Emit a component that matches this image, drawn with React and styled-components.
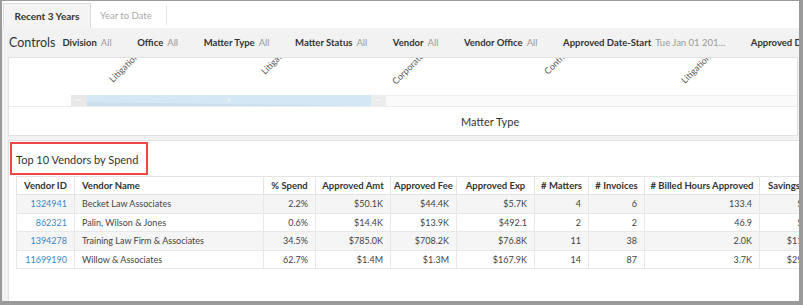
import React from 'react';
import styled, { createGlobalStyle } from 'styled-components';

const Global = createGlobalStyle`
  html, body { margin: 0; padding: 0; background: #fff; }
  body { font-family: Lato, "Noto Sans", sans-serif; color: #333; }
`;

const Frame = styled.div`
  width: 803px;
  height: 305px;
  box-sizing: border-box;
  border-style: solid;
  border-color: #9a9a9a;
  border-width: 1px 4px 4px 2px;
  background: #f2f2f2;
  overflow: hidden;
  display: flex;
  flex-direction: column;
`;

const TabRow = styled.div`
  height: 27px;
  flex: none;
  background: #fff;
  display: flex;
  align-items: stretch;
  padding: 2px 0 0 1px;
  box-sizing: border-box;
`;

const Tab = styled.div`
  display: flex;
  align-items: center;
  font-size: 10px;
  box-sizing: border-box;
  ${p => p.$active ? `
    width: 88px;
    justify-content: center;
    background: #f4f4f4;
    border: 1px solid #dcdcdc;
    border-bottom: none;
    font-weight: 700;
    color: #333;
  ` : `
    padding: 0 14px 0 9px;
    color: #a8a8a8;
    font-size: 9.5px;
  `}
`;

const TabDivider = styled.div`
  width: 1px;
  background: #e6e6e6;
  margin: 2px 0 3px;
`;

const Controls = styled.div`
  height: 29px;
  flex: none;
  display: flex;
  align-items: center;
  padding-left: 7px;
  white-space: nowrap;
`;

const ControlsTitle = styled.span`
  font-size: 12.5px;
  color: #333;
  margin-right: 7px;
`;

const Filter = styled.span`
  font-size: 9.5px;
  margin-right: 25.5px;
  flex: none;
`;

const FilterLabel = styled.b`
  font-weight: 700;
  color: #333;
`;

const FilterValue = styled.span`
  color: #9a9a9a;
  margin-left: 4px;
`;

const Panel = styled.div`
  background: #fff;
  border: 1px solid #e2e2e2;
  box-sizing: border-box;
  margin: ${p => p.$margin};
  display: flex;
  flex-direction: column;
  ${p => p.$grow ? 'flex: 1; border-bottom: none; min-height: 0;' : `flex: none; height: ${p.$h}px;`}
`;

const ChartArea = styled.div`
  height: 48px;
  flex: none;
  overflow: hidden;
`;

const AxisTitle = styled.div`
  flex: 1;
  border-top: 1px solid #ececec;
  display: flex;
  align-items: center;
  padding-left: 452px;
  font-size: 11px;
  color: #333;
`;

const TitleBox = styled.div`
  width: 138px;
  height: 33px;
  box-sizing: border-box;
  border: 2.5px solid #f04545;
  margin: 1px 0 0 1px;
  padding: 2px 0 0 4px;
  display: flex;
  align-items: center;
  font-size: 11px;
  color: #333;
  white-space: nowrap;
`;

const Table = styled.table`
  border-collapse: collapse;
  table-layout: fixed;
  width: ${p => p.$width}px;
  flex: none;
  margin: 1px 0 0 7px;
  font-size: 9px;
  white-space: nowrap;
`;

const Th = styled.th`
  height: 17px;
  padding: 0 ${p => p.$left ? 7 : 3}px;
  border: 1px solid #e4e4e4;
  font-weight: 700;
  font-size: 9.5px;
  color: #333;
  text-align: ${p => p.$left ? 'left' : 'center'};
  overflow: hidden;
`;

const Tr = styled.tr`
  background: ${p => p.$alt ? '#f5f5f5' : '#fff'};
`;

const Td = styled.td`
  height: 17.5px;
  padding: 0 7px;
  border: 1px solid #e8e8e8;
  color: #444;
  text-align: ${p => p.$left ? 'left' : 'right'};
  overflow: hidden;
`;

const Link = styled.span`
  color: #3b86c6;
`;

const filters = [
  ['Division', 'All'],
  ['Office', 'All'],
  ['Matter Type', 'All'],
  ['Matter Status', 'All'],
  ['Vendor', 'All'],
  ['Vendor Office', 'All'],
  ['Approved Date-Start', 'Tue Jan 01 201...'],
  ['Approved Date-End', 'All'],
];

const axisLabels = [
  { x: 104, y: 25, t: 'Litigation ...' },
  { x: 256, y: 17, t: 'Litigation ...' },
  { x: 387, y: 27, t: 'Corporate I...' },
  { x: 539, y: 17, t: 'Contracts ...' },
  { x: 676, y: 26, t: 'Litigation ...' },
];

const cols = [58, 189, 52, 75, 66, 78, 54, 56, 115, 69];
const tableWidth = cols.reduce((a, b) => a + b, 0);
const headers = ['Vendor ID', 'Vendor Name', '% Spend', 'Approved Amt', 'Approved Fee', 'Approved Exp', '# Matters', '# Invoices', '# Billed Hours Approved', 'Savings Amt'];
const rows = [
  ['1324941', 'Becket Law Associates', '2.2%', '$50.1K', '$44.4K', '$5.7K', '4', '6', '133.4', '$5.8K'],
  ['862321', 'Palin, Wilson & Jones', '0.6%', '$14.4K', '$13.9K', '$492.1', '2', '2', '46.9', '$1.2K'],
  ['1394278', 'Training Law Firm & Associates', '34.5%', '$785.0K', '$708.2K', '$76.8K', '11', '38', '2.0K', '$113.6K'],
  ['11699190', 'Willow & Associates', '62.7%', '$1.4M', '$1.3M', '$167.9K', '14', '87', '3.7K', '$293.4K'],
];

function Chart() {
  return (
    <svg width="790" height="48" style={{ display: 'block' }}>
      {axisLabels.map((l, i) => (
        <text key={i} x={l.x} y={l.y} transform={`rotate(-45 ${l.x} ${l.y})`} fontSize="9" fill="#555"
          fontFamily='Lato, sans-serif'>{l.t}</text>
      ))}
      <rect x="377" y="37" width="413" height="11" fill="#fafafa" />
      <line x1="377" x2="790" y1="37.5" y2="37.5" stroke="#efefef" />
      <rect x="62" y="37" width="16" height="11" fill="#e8e8e8" />
      <rect x="78" y="37" width="284" height="11" fill="#d3e8f4" />
      <polygon points="78,44 362,48 78,48" fill="#c9dfec" />
      <rect x="362" y="37" width="15" height="11" fill="#ececec" />
      <line x1="218" x2="222" y1="41" y2="41" stroke="#eef6fb" />
      <line x1="218" x2="222" y1="43" y2="43" stroke="#eef6fb" />
      <line x1="68" x2="72" y1="42" y2="42" stroke="#f6f6f6" />
      <line x1="367" x2="371" y1="42" y2="42" stroke="#f8f8f8" />
    </svg>
  );
}

export default function App() {
  return (
    <>
      <Global />
      <Frame>
        <TabRow>
          <Tab $active>Recent 3 Years</Tab>
          <Tab>Year to Date</Tab>
          <TabDivider />
        </TabRow>
        <Controls>
          <ControlsTitle>Controls</ControlsTitle>
          {filters.map(([l, v]) => (
            <Filter key={l}>
              <FilterLabel>{l}</FilterLabel>
              <FilterValue>{v}</FilterValue>
            </Filter>
          ))}
        </Controls>
        <Panel $h={79} $margin="0 1px 0 6px">
          <ChartArea><Chart /></ChartArea>
          <AxisTitle>Matter Type</AxisTitle>
        </Panel>
        <Panel $grow $margin="4px -30px 0 6px">
          <TitleBox>Top 10 Vendors by Spend</TitleBox>
          <Table $width={tableWidth}>
            <colgroup>
              {cols.map((w, i) => <col key={i} style={{ width: w }} />)}
            </colgroup>
            <thead>
              <tr>
                {headers.map((h, i) => (
                  <Th key={h} $left={i === 1}>{h}</Th>
                ))}
              </tr>
            </thead>
            <tbody>
              {rows.map((r, ri) => (
                <Tr key={r[0]} $alt={ri % 2 === 0}>
                  {r.map((c, ci) => (
                    <Td key={ci} $left={ci === 1}>{ci === 0 ? <Link>{c}</Link> : c}</Td>
                  ))}
                </Tr>
              ))}
            </tbody>
          </Table>
        </Panel>
      </Frame>
    </>
  );
}
